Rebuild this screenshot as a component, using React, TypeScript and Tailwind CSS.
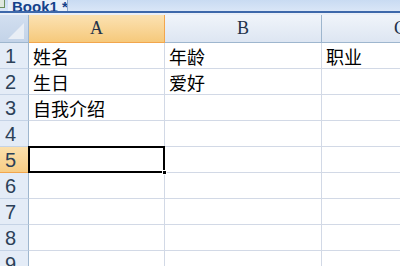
import React from 'react';

const cjk = { fontFamily: '"Noto Sans CJK SC", "Liberation Sans", sans-serif' };

// sheet content, keyed by row number
const rows: { n: number; a?: string; b?: string; c?: string }[] = [
  { n: 1, a: '姓名', b: '年龄', c: '职业' },
  { n: 2, a: '生日', b: '爱好' },
  { n: 3, a: '自我介绍' },
  { n: 4 },
  { n: 5 },
  { n: 6 },
  { n: 7 },
  { n: 8 },
  { n: 9 },
];

const SELECTED_ROW = 5;

function Cell({ text, selected }: { text?: string; selected?: boolean }) {
  return (
    <div className="relative h-[26px] border-r border-b border-[#d2d9e6] bg-white pl-[4px] flex items-end pb-[1px] overflow-visible">
      {text && (
        <span className="text-[18px] leading-[22px] text-black whitespace-nowrap" style={cjk}>
          {text}
        </span>
      )}
      {selected && (
        <>
          <div className="absolute -left-[1px] -top-[1px] -right-[1px] -bottom-[1px] border-2 border-black z-10" />
          <div className="absolute -right-[3px] -bottom-[3px] w-[5px] h-[5px] bg-black border border-white z-20" />
        </>
      )}
    </div>
  );
}

export default function App() {
  return (
    <div className="w-[400px] h-[266px] overflow-hidden bg-white">
      {/* workbook tab strip */}
      <div className="h-[11px] flex bg-gradient-to-b from-[#c9dbf2] to-[#d9e6f7] overflow-hidden">
        <div className="w-[8px] flex items-start">
          <div className="w-[5px] h-[8px] bg-[#dfe8df] border border-[#6b8f5e] border-t-0 border-l-0" />
        </div>
        <div className="w-[60px] bg-[#e9f0fa] border-r border-[#8ea9cf] flex items-end overflow-hidden">
          <span
            className="ml-[4px] text-[15px] leading-[15px] font-bold text-[#15428b] whitespace-nowrap -mb-[3px]"
            style={{ fontFamily: '"Liberation Sans", Arial, sans-serif' }}
          >
            Book1 *
          </span>
        </div>
      </div>
      <div className="h-[2px] bg-[#3d68aa]" />
      <div className="h-[2px] bg-[#e9eff8]" />

      {/* column headers */}
      <div className="grid grid-cols-[29px_136px_157px_157px] h-[28px]">
        <div className="relative border-r border-b border-[#9eb6ce] bg-gradient-to-b from-[#d2dff0] to-[#c3d3e8] overflow-hidden">
          <svg className="absolute inset-0" width="29" height="28" viewBox="0 0 29 28">
            <polygon points="8,24 24,24 24,8" fill="#e9eef5" />
          </svg>
        </div>
        {['A', 'B', 'C'].map((col) => (
          <div
            key={col}
            className={
              col === 'A'
                ? 'border-r border-b border-[#f2a64d] bg-gradient-to-b from-[#fbe2b2] to-[#f6c97b] flex items-center justify-center'
                : 'border-r border-b border-[#9eb6ce] bg-gradient-to-b from-[#f0f4fa] to-[#dde6f2] flex items-center justify-center'
            }
          >
            <span
              className="text-[18px] text-[#22324a]"
              style={{ fontFamily: '"Liberation Serif", "Times New Roman", serif' }}
            >
              {col}
            </span>
          </div>
        ))}
      </div>

      {/* sheet rows */}
      {rows.map((r) => (
        <div key={r.n} className="grid grid-cols-[29px_136px_157px_157px]">
          <div
            className={
              r.n === SELECTED_ROW
                ? 'h-[26px] border-r border-b border-[#f2a64d] bg-gradient-to-b from-[#fbe0ad] to-[#f7cd85] pl-[5px] flex items-center'
                : 'h-[26px] border-r border-b border-r-[#9eb6ce] border-b-[#c5d3e6] bg-[#e4ecf7] pl-[5px] flex items-center'
            }
          >
            <span
              className="text-[20px] leading-[20px] text-[#2c4158]"
              style={{ fontFamily: '"Liberation Sans", Arial, sans-serif' }}
            >
              {r.n}
            </span>
          </div>
          <Cell text={r.a} selected={r.n === SELECTED_ROW} />
          <Cell text={r.b} />
          <Cell text={r.c} />
        </div>
      ))}
    </div>
  );
}
